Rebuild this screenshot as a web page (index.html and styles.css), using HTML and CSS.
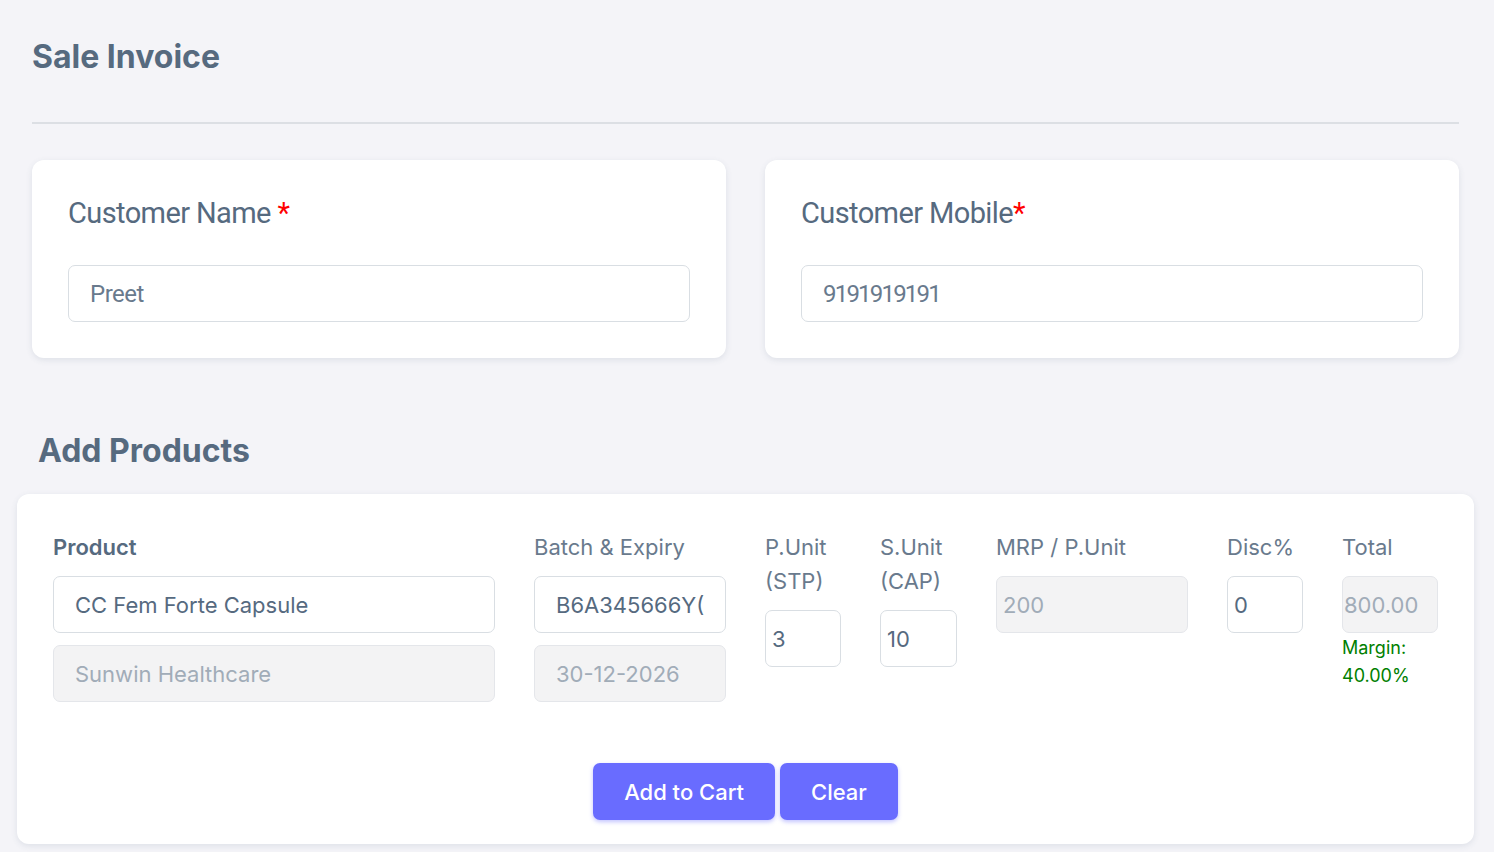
FILE: index.html
```html
<!DOCTYPE html>
<html lang="en">
<head>
<meta charset="utf-8">
<title>Sale Invoice</title>
<link rel="stylesheet" href="styles.css">
</head>
<body>
<main class="page">
  <h1 class="page-title">Sale Invoice</h1>
  <hr class="divider">

  <section class="customer-row">
    <div class="card customer-card">
      <label class="cust-label">Customer Name <span class="req">*</span></label>
      <input class="cust-input" type="text" value="Preet">
    </div>
    <div class="card customer-card">
      <label class="cust-label">Customer Mobile<span class="req">*</span></label>
      <input class="cust-input numeric" type="text" value="9191919191">
    </div>
  </section>

  <h2 class="section-title">Add Products</h2>

  <section class="card product-card">
    <div class="product-grid">
      <div class="col">
        <div class="plabel strong">Product</div>
        <input class="pinput" type="text" value="CC Fem Forte Capsule">
        <input class="pinput disabled" type="text" value="Sunwin Healthcare" disabled>
      </div>
      <div class="col">
        <div class="plabel">Batch &amp; Expiry</div>
        <input class="pinput" type="text" value="B6A345666Y(30-12-2026)">
        <input class="pinput disabled" type="text" value="30-12-2026" disabled>
      </div>
      <div class="col">
        <div class="plabel">P.Unit (STP)</div>
        <input class="pinput narrow" type="text" value="3">
      </div>
      <div class="col">
        <div class="plabel">S.Unit (CAP)</div>
        <input class="pinput narrow" type="text" value="10">
      </div>
      <div class="col">
        <div class="plabel">MRP / P.Unit</div>
        <input class="pinput narrow disabled" type="text" value="200" disabled>
      </div>
      <div class="col">
        <div class="plabel">Disc%</div>
        <input class="pinput narrow" type="text" value="0">
      </div>
      <div class="col">
        <div class="plabel">Total</div>
        <input class="pinput total disabled" type="text" value="800.00" disabled>
        <div class="margin-note">Margin:<br>40.00%</div>
      </div>
    </div>
    <div class="actions">
      <button class="btn" type="button">Add to Cart</button>
      <button class="btn" type="button">Clear</button>
    </div>
  </section>
</main>
</body>
</html>
```

FILE: styles.css
```css
* { box-sizing: border-box; }

html, body {
  margin: 0;
  padding: 0;
  background: #f4f4f8;
}

body {
  font-family: Inter, "Noto Sans", "Liberation Sans", sans-serif;
  color: #566a7f;
  height: 852px;
  overflow: hidden;
}

.page {
  padding: 37px 35px 0 32px;
}

.page-title {
  margin: 0;
  font-size: 32px;
  line-height: 40px;
  font-weight: 700;
  color: #566a7f;
}

.divider {
  margin: 45px 0 0;
  border: 0;
  height: 2px;
  background: #dcdfe4;
}

.card {
  background: #fff;
  border-radius: 12px;
  box-shadow: 0 2px 6px 0 rgba(67, 89, 113, 0.12);
}

.customer-row {
  margin-top: 36px;
  display: grid;
  grid-template-columns: 1fr 1fr;
  column-gap: 39px;
}

.customer-card {
  padding: 36px;
  display: flex;
  flex-direction: column;
}

.cust-label {
  font-family: Roboto, "Liberation Sans", sans-serif;
  font-size: 29px;
  line-height: 34px;
  color: #566a7f;
  letter-spacing: -0.6px;
  margin-bottom: 35px;
}

.req { color: #ff0000; }

.cust-input {
  height: 57px;
  border: 1px solid #d9dee3;
  border-radius: 7px;
  padding: 0 21px;
  font-family: Roboto, "Liberation Sans", sans-serif;
  font-size: 24px;
  letter-spacing: -0.5px;
  color: #697a8d;
  background: #fff;
  outline: none;
}

.cust-input.numeric {
  letter-spacing: -1.8px;
}

.section-title {
  margin: 73px 0 0 6px;
  font-size: 32px;
  line-height: 40px;
  font-weight: 700;
  color: #566a7f;
}

.product-card {
  margin: 23px -15px 0 -15px;
  padding: 36px 36px 24px 36px;
}

.product-grid {
  display: grid;
  grid-template-columns: 442px 192px 76px 77px 192px 76px 96px;
  column-gap: 39px;
  align-items: start;
}

.col {
  display: flex;
  flex-direction: column;
  gap: 12px;
}

.plabel {
  font-size: 22px;
  line-height: 34px;
  color: #697a8d;
}

.plabel.strong {
  font-weight: 600;
  color: #566a7f;
}

.pinput {
  width: 100%;
  height: 57px;
  border: 1px solid #d9dee3;
  border-radius: 7px;
  padding: 0 21px;
  font-family: Inter, "Noto Sans", "Liberation Sans", sans-serif;
  font-size: 22px;
  color: #566a7f;
  background: #fff;
  outline: none;
}

.pinput.narrow {
  padding: 0 6px;
}

.pinput.total {
  padding: 0 6px 0 1px;
}

.pinput.disabled {
  background: #f3f3f4;
  border-color: #e4e6ea;
  color: #a1acb8;
}

.margin-note {
  margin-top: -11px;
  font-size: 18px;
  line-height: 28px;
  color: #008000;
}

.actions {
  margin-top: 61px;
  display: flex;
  justify-content: center;
  gap: 5px;
}

.btn {
  height: 57px;
  padding: 0 31px;
  border: 0;
  border-radius: 7px;
  background: #696cff;
  color: #fff;
  font-family: Inter, "Noto Sans", "Liberation Sans", sans-serif;
  font-size: 22px;
  font-weight: 500;
  box-shadow: 0 2px 4px 0 rgba(105, 108, 255, 0.4);
  cursor: pointer;
}
```
